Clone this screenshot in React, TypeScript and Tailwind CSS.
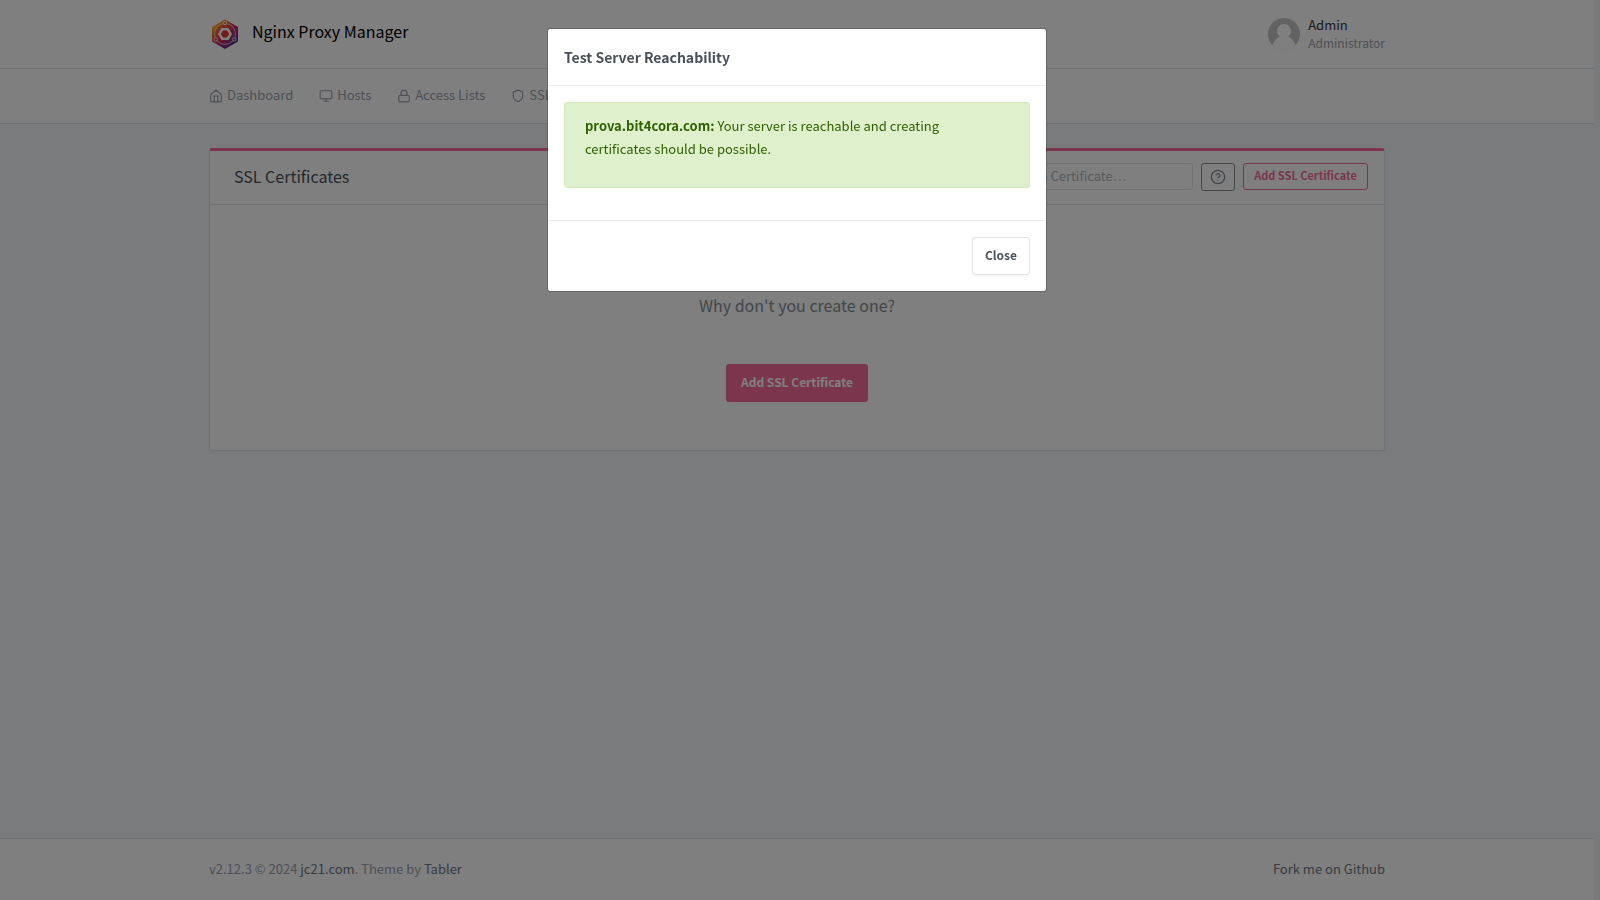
import React from 'react';
import { FiHelpCircle, FiHome, FiLock, FiMonitor, FiShield } from 'react-icons/fi';

const navItems = [
  { label: 'Dashboard', icon: FiHome },
  { label: 'Hosts', icon: FiMonitor },
  { label: 'Access Lists', icon: FiLock },
  { label: 'SSL Certificates', icon: FiShield },
];

function Logo() {
  return (
    <svg className="h-8 w-8" viewBox="0 0 32 32" aria-hidden="true">
      <defs>
        <linearGradient id="logo-fill" x1="0.1" y1="0.1" x2="0.75" y2="0.85">
          <stop offset="0" stopColor="#fbd02c" />
          <stop offset="0.35" stopColor="#f0592f" />
          <stop offset="0.65" stopColor="#b8277f" />
          <stop offset="1" stopColor="#5b2d8f" />
        </linearGradient>
        <linearGradient id="logo-ring" x1="0.1" y1="0.1" x2="0.9" y2="0.9">
          <stop offset="0" stopColor="#f58529" />
          <stop offset="0.5" stopColor="#dd2f4a" />
          <stop offset="1" stopColor="#663695" />
        </linearGradient>
      </defs>
      <path d="M16 1.500 29 9v14.500l-13 7.500-13-7.500V9z" fill="url(#logo-fill)" />
      <circle cx="16" cy="16" r="10.500" fill="url(#logo-ring)" stroke="#fff" strokeOpacity="0.6" />
      <path
        d="M12.800 10.800h6.400l3 5.200-3 5.200h-6.400l-3-5.200z"
        fill="#fff"
        stroke="#fff"
        strokeWidth="1.500"
        strokeLinejoin="round"
      />
      <path d="M14.200 12.900h3.600l1.800 3.100-1.800 3.100h-3.600L12.400 16z" fill="#e8352e" stroke="#e8352e" />
      <g fill="#b8277f" stroke="#fff" strokeOpacity="0.8">
        <circle cx="16" cy="5" r="1.700" fill="#f58529" />
        <circle cx="6.700" cy="21.400" r="1.700" />
        <circle cx="25.300" cy="21.400" r="1.700" fill="#663695" />
      </g>
    </svg>
  );
}

function Avatar() {
  return (
    <svg className="h-8 w-8" viewBox="0 0 32 32" role="img" aria-label="Admin avatar">
      <defs>
        <clipPath id="avatar-clip">
          <circle cx="16" cy="16" r="16" />
        </clipPath>
      </defs>
      <g clipPath="url(#avatar-clip)">
        <rect width="32" height="32" fill="#c5c5c5" />
        <circle cx="16" cy="13" r="7" fill="#fff" />
        <path d="M4 28c2-5 5-8.500 8-9.500h8c3 1 6 4.500 8 9.500v6H4z" fill="#fff" />
      </g>
    </svg>
  );
}

function Header() {
  return (
    <header className="border-b border-[#dee3eb] bg-white">
      <div className="mx-auto flex h-17 max-w-[1200px] items-center justify-between px-3">
        <a href="#" className="flex items-center gap-[11px] text-[16px] leading-6 text-black">
          <Logo />
          <span className="pb-1.5">Nginx Proxy Manager</span>
        </a>
        <a href="#" className="flex items-center gap-2">
          <Avatar />
          <span className="flex flex-col">
            <span className="text-[13px] leading-[18px] text-[#343a40]">Admin</span>
            <span className="text-[12px] leading-[18px] text-[#9aa0ac]">Administrator</span>
          </span>
        </a>
      </div>
    </header>
  );
}

function NavBar() {
  return (
    <nav className="border-b border-[#dee3eb] bg-white">
      <ul className="mx-auto flex h-[54px] max-w-[1200px] items-center gap-[26px] px-3">
        {navItems.map(({ label, icon: Icon }) => (
          <li key={label}>
            <a href="#" className="flex items-center gap-1 text-[13px] leading-5 text-[#9aa0ac]">
              <Icon className="h-[14px] w-[14px]" />
              <span className="pb-0.5">{label}</span>
            </a>
          </li>
        ))}
      </ul>
    </nav>
  );
}

function CertificatesCard() {
  return (
    <section className="rounded-[3px] border border-t-3 border-[#dee3eb] border-t-[#f66d9b] bg-white shadow-xs">
      <div className="flex h-[54px] items-center border-b border-[#dee3eb] pr-4 pb-0.5 pl-6">
        <h3 className="pb-0.5 text-[16px] leading-6 text-[#495057]">SSL Certificates</h3>
        <div className="ml-auto flex items-start gap-2">
          <input
            type="text"
            aria-label="Search certificates"
            placeholder="Search Certificate…"
            className="h-[27px] w-[196px] rounded-[3px] border border-[#dee3eb] px-2 pb-0.5 text-[13px] placeholder-[#adb5bd]"
          />
          <button
            type="button"
            aria-label="Help"
            className="flex h-7 w-[34px] items-center justify-center rounded-[3px] border border-[#868e96] text-[#868e96]"
          >
            <FiHelpCircle className="h-4 w-4" />
          </button>
          <button
            type="button"
            className="h-[27px] w-[125px] rounded-[3px] border border-[#f66d9b] pb-0.5 text-[11px] font-bold text-[#f66d9b]"
          >
            Add SSL Certificate
          </button>
        </div>
      </div>
      <div className="flex flex-col items-center gap-[45px] pt-[86px] pb-12">
        <p className="text-[16px] leading-7 text-[#868e96]">Why don't you create one?</p>
        <button
          type="button"
          className="h-[38px] w-[142px] rounded-[3px] bg-[#f66d9b] pb-0.5 text-[12px] font-bold text-white"
        >
          Add SSL Certificate
        </button>
      </div>
    </section>
  );
}

function Footer() {
  return (
    <footer className="border-t border-[#dee3eb] bg-white">
      <div className="mx-auto flex max-w-[1200px] justify-between px-3 pt-[19px] pb-[21px] text-[13px] leading-[21px] text-[#9aa0ac]">
        <p>
          v2.12.3 © 2024{' '}
          <a href="#" className="text-[#6e7687]">
            jc21.com
          </a>
          . Theme by{' '}
          <a href="#" className="text-[#6e7687]">
            Tabler
          </a>
        </p>
        <a href="#" className="text-[#6e7687]">
          Fork me on Github
        </a>
      </div>
    </footer>
  );
}

function ReachabilityModal() {
  return (
    <div className="fixed inset-0 bg-black/50 pr-1.5">
      <div
        role="dialog"
        aria-modal="true"
        aria-labelledby="modal-title"
        className="mx-auto mt-7 max-w-[500px] rounded-[3px] border border-black/20 bg-white bg-clip-padding"
      >
        <div className="border-b border-[#e9ecef] p-4">
          <h5 id="modal-title" className="text-[14px] leading-6 font-bold text-[#495057]">
            Test Server Reachability
          </h5>
        </div>
        <div className="px-4 pt-4 pb-8">
          <div
            role="alert"
            className="rounded-[3px] border border-[#cfeab8] bg-[#dff0cc] pt-[11px] pr-14 pb-[27px] pl-5 text-[13px] leading-[23px] text-[#316100]"
          >
            <strong className="font-bold">prova.bit4cora.com:</strong> Your server is reachable and creating certificates
            should be possible.
          </div>
        </div>
        <div className="flex justify-end border-t border-[#e9ecef] p-4">
          <button
            type="button"
            className="h-[38px] rounded-[3px] border border-[#dee3eb] bg-white px-3 pb-0.5 text-[12px] font-bold text-[#495057] shadow-xs"
          >
            Close
          </button>
        </div>
      </div>
    </div>
  );
}

export default function App() {
  return (
    <div className="min-h-screen bg-[#f5f7fb] pr-1.5 font-['Noto_Sans_CJK_SC',sans-serif]">
      <div className="flex min-h-screen flex-col">
        <Header />
        <NavBar />
        <main className="mx-auto w-full max-w-[1200px] flex-1 px-3 py-6">
          <CertificatesCard />
        </main>
        <Footer />
      </div>
      <ReachabilityModal />
    </div>
  );
}
